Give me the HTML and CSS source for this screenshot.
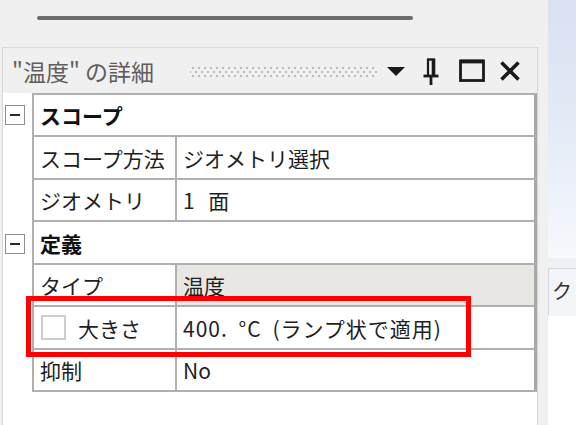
FILE: index.html
```html
<!DOCTYPE html>
<html lang="ja">
<head>
<meta charset="utf-8">
<link rel="stylesheet" href="styles.css">
</head>
<body>
<div class="app">
  <div class="left">
    <div class="top"><div class="rule"></div></div>
    <div class="panel">
      <div class="titlebar">
        <span class="title">"温度" の詳細</span>
        <span class="grip"></span>
        <svg class="ico tri" width="20" height="11" viewBox="0 0 20 11"><polygon points="1,1 19,1 10,10" fill="#1a1a1a"/></svg>
        <svg class="ico pin" width="18" height="27" viewBox="0 0 18 27"><path d="M5 1.5h8" stroke="#1a1a1a" stroke-width="2.4" fill="none"/><path d="M6 1v17" stroke="#1a1a1a" stroke-width="2.2"/><path d="M11.5 1v17" stroke="#1a1a1a" stroke-width="3.6"/><path d="M1.5 18h15" stroke="#1a1a1a" stroke-width="2.8"/><path d="M9 18v9" stroke="#1a1a1a" stroke-width="2.8"/></svg>
        <svg class="ico max" width="26" height="23" viewBox="0 0 26 23"><rect x="1.5" y="2" width="23" height="19.5" stroke="#1a1a1a" stroke-width="2.8" fill="none"/><path d="M1 2.5h24" stroke="#1a1a1a" stroke-width="3.8"/></svg>
        <svg class="ico close" width="22" height="22" viewBox="0 0 22 22"><path d="M2.5 2.5L19.5 19.5M19.5 2.5L2.5 19.5" stroke="#1a1a1a" stroke-width="3.6" fill="none"/></svg>
      </div>
      <div class="tree">
        <div class="row h44 first">
          <div class="gut"><span class="exp"></span></div>
          <div class="cells"><div class="cell full bold">スコープ</div></div>
        </div>
        <div class="row h43">
          <div class="gut"></div>
          <div class="cells"><div class="cell lbl">スコープ方法</div><div class="cell val">ジオメトリ選択</div></div>
        </div>
        <div class="row h42">
          <div class="gut"></div>
          <div class="cells"><div class="cell lbl">ジオメトリ</div><div class="cell val wide">1 面</div></div>
        </div>
        <div class="row h43">
          <div class="gut"><span class="exp"></span></div>
          <div class="cells"><div class="cell full bold">定義</div></div>
        </div>
        <div class="row h42">
          <div class="gut"></div>
          <div class="cells"><div class="cell lbl">タイプ</div><div class="cell val shaded">温度</div></div>
        </div>
        <div class="row h43">
          <div class="gut"></div>
          <div class="cells"><div class="cell lbl"><span class="chk"></span>大きさ</div><div class="cell val spaced">400. °C (ランプ状で適用)</div></div>
        </div>
        <div class="row h42">
          <div class="gut"></div>
          <div class="cells"><div class="cell lbl">抑制</div><div class="cell val">No</div></div>
        </div>
      </div>
    </div>
  </div>
  <div class="right">
    <div class="rtop"></div>
    <div class="rband"></div>
    <div class="rtab">ク</div>
    <div class="rbody"></div>
  </div>
  <div class="hl"></div>
</div>
</body>
</html>
```
FILE: styles.css
```css
html, body {
  margin: 0;
  padding: 0;
}
body {
  width: 576px;
  height: 425px;
  overflow: hidden;
  background: #f0f0f0;
  font-family: "Noto Sans CJK JP", "Noto Sans", sans-serif;
  color: #1e1e1e;
}
.app {
  position: relative;
  display: flex;
  width: 576px;
  height: 425px;
}
.left {
  width: 548px;
  display: flex;
  flex-direction: column;
}
.top {
  height: 47px;
  padding-top: 16px;
  box-sizing: border-box;
}
.rule {
  margin-left: 37px;
  width: 376px;
  height: 4px;
  border-radius: 2px;
  background: #6c6c6c;
}
.panel {
  flex: 1;
  margin-left: 2px;
  width: 536px;
  box-sizing: border-box;
  border-left: 1px solid #d6d6d6;
  border-right: 1px solid #d6d6d6;
  background: #fff;
  display: flex;
  flex-direction: column;
}
.titlebar {
  height: 46px;
  box-sizing: border-box;
  border-top: 1px solid #d8d8d8;
  background: #f0f0f0;
  display: flex;
  align-items: center;
}
.title {
  width: 178px;
  padding-left: 9px;
  box-sizing: border-box;
  font-size: 23px;
  color: #5e5e5e;
  white-space: nowrap;
}
.grip {
  width: 188px;
  height: 12px;
  margin-left: 9px;
  background-image:
    radial-gradient(circle, #bcbcbc 0.9px, transparent 1.4px),
    radial-gradient(circle, #bcbcbc 0.9px, transparent 1.4px);
  background-size: 6px 8px, 6px 8px;
  background-position: 0 -1px, 3px 3px;
}
.ico { display: block; }
.tri { margin-left: 8px; margin-top: 2px; }
.pin { margin-left: 16px; margin-top: 2px; }
.max { margin-left: 19px; margin-top: -1px; }
.close { margin-left: 14px; margin-top: 0; }

.tree {
  display: flex;
  flex-direction: column;
}
.row {
  display: flex;
}
.gut {
  width: 29px;
  flex: none;
  display: flex;
  align-items: center;
  padding-left: 2px;
  box-sizing: border-box;
}
.exp {
  width: 20px;
  height: 20px;
  box-sizing: border-box;
  border: 1px solid #8e8e8e;
  background: #fff;
  display: flex;
  align-items: center;
  justify-content: center;
}
.exp::after {
  content: "";
  width: 10px;
  height: 2px;
  background: #2a2a2a;
}
.cells {
  flex: 1;
  display: flex;
  box-sizing: border-box;
  border-left: 2px solid #b0b0b0;
  border-right: 3px solid #a8a8a8;
  border-bottom: 2px solid #b0b0b0;
}
.first .cells { border-top: 2px solid #b0b0b0; }
.h44 { height: 44px; }
.h43 { height: 43px; }
.h42 { height: 42px; }
.cell {
  display: flex;
  align-items: center;
  font-size: 21px;
  padding-left: 6px;
  box-sizing: border-box;
  white-space: pre;
}
.full { flex: 1; }
.bold { font-weight: 700; color: #111; }
.lbl { width: 141px; flex: none; }
.val {
  flex: 1;
  border-left: 2px solid #b0b0b0;
  word-spacing: 5px;
}
.wide { word-spacing: 9px; }
.spaced { letter-spacing: 1px; word-spacing: 5px; }
.shaded { background: #e9e7e4; }
.chk {
  width: 25px;
  height: 25px;
  box-sizing: border-box;
  border: 2px solid #cdcdcd;
  background: #fff;
  margin-left: 1px;
  margin-right: 12px;
}

.right {
  width: 28px;
  display: flex;
  flex-direction: column;
}
.rtop {
  height: 258px;
  background: linear-gradient(to bottom, #d8e2f3 0%, #e3eaf6 45%, #f6f8fc 100%);
}
.rband {
  height: 10px;
  background: #eef0f4;
}
.rtab {
  height: 48px;
  box-sizing: border-box;
  border-top: 1px solid #d4d8e2;
  border-left: 1px solid #d4d8e2;
  background: #f4f5f8;
  font-size: 20px;
  color: #333;
  padding-left: 3px;
  line-height: 44px;
  overflow: hidden;
}
.rbody {
  flex: 1;
  background: #fff;
}
.hl {
  position: absolute;
  left: 26px;
  top: 296px;
  width: 445px;
  height: 61px;
  box-sizing: border-box;
  border: 5px solid #ff0000;
}
```
